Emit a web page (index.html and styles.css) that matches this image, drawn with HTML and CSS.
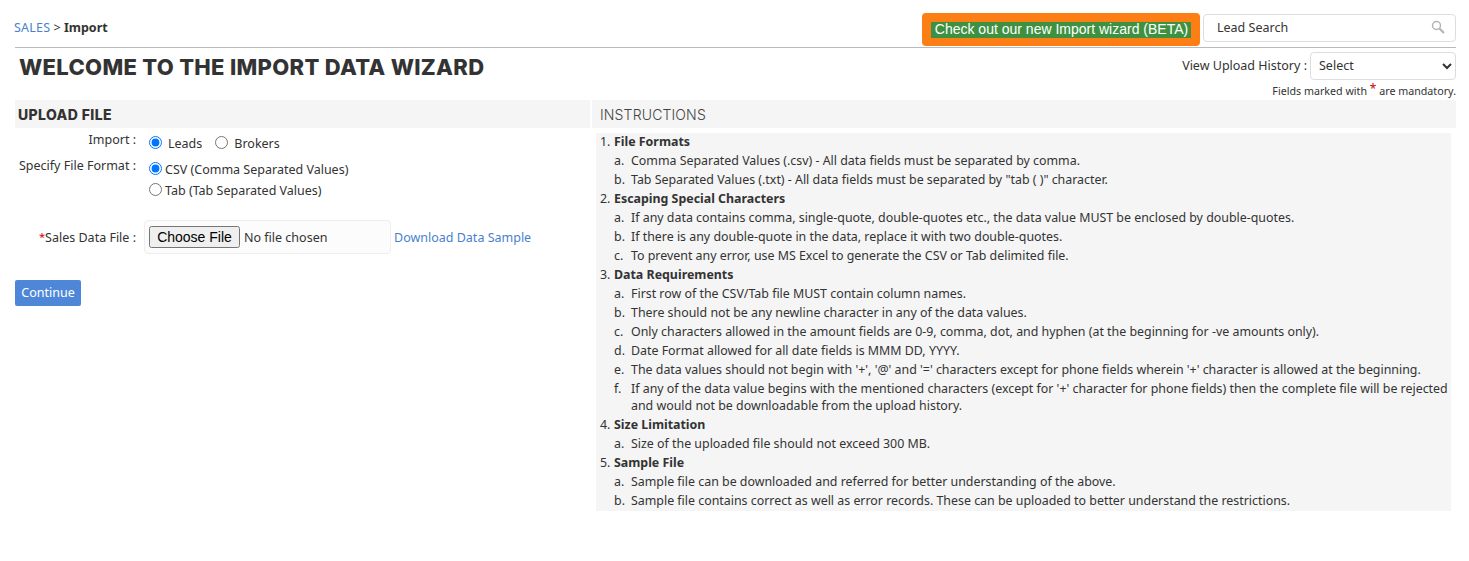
FILE: index.html
```html
<!DOCTYPE html>
<html lang="en">
<head>
    <meta charset="UTF-8">
    <meta name="viewport" content="width=device-width, initial-scale=1.0">
    <title>Import Data Wizard</title>
    <link rel="stylesheet" href="styles.css">
</head>
<body>

    <div class="page">
        <div class="top-bar">
            <div class="breadcrumb"><a href="#">SALES</a> &gt; <b>Import</b></div>
            <div class="top-actions">
                <div class="wizard-btn"><span>Check out our new Import wizard (BETA)</span></div>
                <div class="lead-search">
                    <span>Lead Search</span>
                    <svg width="14" height="14" viewBox="0 0 14 14" fill="none" stroke="#b5b5b5">
                        <circle cx="5.5" cy="5.5" r="4" stroke-width="1.5"/>
                        <path d="M8.5 8.5 L13 13" stroke-width="2.2"/>
                    </svg>
                </div>
            </div>
        </div>

        <div class="title-row">
            <h1>WELCOME TO THE IMPORT DATA WIZARD</h1>
            <div class="title-right">
                <div class="history">
                    <label>View Upload History :</label>
                    <select><option>Select</option></select>
                </div>
                <div class="mandatory">Fields marked with <span class="req big">*</span> are mandatory.</div>
            </div>
        </div>

        <div class="columns">
            <div class="upload">
                <h3 class="upload-title">UPLOAD FILE</h3>
                <div class="form-row row-import">
                    <div class="form-label">Import :</div>
                    <div class="inline-radios">
                        <label><input type="radio" name="kind" checked>Leads</label>
                        <label><input type="radio" name="kind">Brokers</label>
                    </div>
                </div>
                <div class="form-row row-format">
                    <div class="form-label">Specify File Format :</div>
                    <div class="stack-radios">
                        <label><input type="radio" name="format" checked>CSV (Comma Separated Values)</label>
                        <label><input type="radio" name="format">Tab (Tab Separated Values)</label>
                    </div>
                </div>
                <div class="form-row row-file">
                    <div class="form-label"><span class="req">*</span>Sales Data File :</div>
                    <div class="file-box"><input type="file"></div>
                    <a href="#" class="sample">Download Data Sample</a>
                </div>
                <button class="continue">Continue</button>
            </div>

            <div class="instructions">
                <h3 class="instructions-title">INSTRUCTIONS</h3>
                <ol class="steps">
                    <li><b>File Formats</b>
                        <ol>
                            <li>Comma Separated Values (.csv) - All data fields must be separated by comma.</li>
                            <li>Tab Separated Values (.txt) - All data fields must be separated by "tab ( )" character.</li>
                        </ol>
                    </li>
                    <li><b>Escaping Special Characters</b>
                        <ol>
                            <li>If any data contains comma, single-quote, double-quotes etc., the data value MUST be enclosed by double-quotes.</li>
                            <li>If there is any double-quote in the data, replace it with two double-quotes.</li>
                            <li>To prevent any error, use MS Excel to generate the CSV or Tab delimited file.</li>
                        </ol>
                    </li>
                    <li><b>Data Requirements</b>
                        <ol>
                            <li>First row of the CSV/Tab file MUST contain column names.</li>
                            <li>There should not be any newline character in any of the data values.</li>
                            <li>Only characters allowed in the amount fields are 0-9, comma, dot, and hyphen (at the beginning for -ve amounts only).</li>
                            <li>Date Format allowed for all date fields is MMM DD, YYYY.</li>
                            <li>The data values should not begin with '+', '@' and '=' characters except for phone fields wherein '+' character is allowed at the beginning.</li>
                            <li>If any of the data value begins with the mentioned characters (except for '+' character for phone fields) then the complete file will be rejected and would not be downloadable from the upload history.</li>
                        </ol>
                    </li>
                    <li><b>Size Limitation</b>
                        <ol>
                            <li>Size of the uploaded file should not exceed 300 MB.</li>
                        </ol>
                    </li>
                    <li><b>Sample File</b>
                        <ol>
                            <li>Sample file can be downloaded and referred for better understanding of the above.</li>
                            <li>Sample file contains correct as well as error records. These can be uploaded to better understand the restrictions.</li>
                        </ol>
                    </li>
                </ol>
            </div>
        </div>
    </div>

</body>
</html>
```

FILE: styles.css
```css
* {
    margin: 0;
    padding: 0;
    box-sizing: border-box;
}

body {
    font-family: "Noto Sans", Arial, sans-serif;
    font-size: 12.5px;
    color: #333;
    background: #fff;
}

a {
    color: #4a7fd0;
    text-decoration: none;
}

.page {
    padding: 0 13px 0 15px;
}

.top-bar {
    display: flex;
    justify-content: space-between;
    height: 48px;
    padding-top: 13px;
    border-bottom: 1px solid #b9b9b9;
}

.breadcrumb {
    padding-top: 6px;
    line-height: 17px;
    margin-left: -1px;
}

.breadcrumb a {
    letter-spacing: 0.2px;
}

.top-actions {
    display: flex;
    gap: 3px;
}

.wizard-btn {
    width: 278px;
    height: 33px;
    background: #fd7e14;
    border-radius: 4px;
    padding-top: 8px;
    text-align: center;
}

.wizard-btn span {
    display: inline-block;
    background: #3f9142;
    color: #fff;
    font-family: "Liberation Sans", Arial, sans-serif;
    font-size: 14px;
    line-height: 15px;
    padding: 0 3px 1px 4px;
}

.lead-search {
    width: 253px;
    height: 28px;
    margin-top: 1px;
    border: 1px solid #ddd;
    border-radius: 4px;
    display: flex;
    justify-content: space-between;
    align-items: center;
    padding: 0 10px 2px 13px;
}

.title-row {
    display: flex;
    justify-content: space-between;
    height: 52px;
}

h1 {
    font-family: Inter, Arial, sans-serif;
    font-size: 22px;
    font-weight: 800;
    letter-spacing: 0.3px;
    margin: 5px 0 0 4px;
    line-height: 28px;
    color: #333;
}

.title-right {
    text-align: right;
}

.history {
    display: flex;
    justify-content: flex-end;
    align-items: center;
    gap: 3px;
    margin-top: 4px;
}

.history label {
    padding-bottom: 2px;
}

.history select {
    width: 146px;
    height: 28px;
    border: 1px solid #ddd;
    border-radius: 4px;
    background: #fff;
    font-family: inherit;
    font-size: 12.5px;
    line-height: 17px;
    color: #333;
    padding: 0 0 2px 4px;
}

.mandatory {
    font-size: 10.7px;
    line-height: 14px;
    margin-top: 4px;
}

.req {
    color: #c00;
    font-size: 11px;
    vertical-align: 1px;
}

.big {
    font-size: 12px;
    line-height: 10px;
    vertical-align: 2px;
}

.columns {
    display: flex;
    gap: 2px;
}

.upload {
    width: 575px;
}

.upload-title {
    background: #f5f5f5;
    height: 28px;
    line-height: 30px;
    padding-left: 3px;
    font-size: 14px;
    font-weight: 800;
    letter-spacing: 0.4px;
    font-family: Inter, Arial, sans-serif;
}

.form-row {
    display: flex;
}

.form-label {
    width: 121px;
    text-align: right;
    flex-shrink: 0;
}

.row-import {
    margin-top: 3px;
    height: 26px;
    line-height: 17px;
}

.inline-radios {
    padding-left: 13px;
    display: flex;
    gap: 13px;
}

.inline-radios input,
.stack-radios input {
    width: 13px;
    height: 13px;
    vertical-align: -1px;
}

.inline-radios label {
    line-height: 26px;
}

.inline-radios input {
    margin-right: 6px;
}

.row-format {
    height: 55px;
    line-height: 17px;
}

.stack-radios {
    padding-left: 13px;
    padding-top: 2px;
}

.stack-radios label {
    display: block;
    height: 21px;
    line-height: 21px;
}

.stack-radios input {
    margin-right: 3px;
}

.row-file {
    align-items: center;
    height: 34px;
    margin-top: 8px;
}

.file-box {
    width: 247px;
    height: 34px;
    margin-left: 8px;
    margin-right: 3px;
    padding: 5px 4px;
    border: 1px solid #eee;
    border-radius: 4px;
    background: #fcfcfc;
}

.file-box input {
    font-family: inherit;
    font-size: 12.5px;
    width: 230px;
}

.file-box input::file-selector-button {
    font-family: "Liberation Sans", Arial, sans-serif;
    font-size: 14px;
    width: 91px;
    height: 22px;
    margin-right: 4px;
}

.continue {
    display: block;
    margin-top: 26px;
    width: 66px;
    height: 26px;
    background: #4f87d8;
    color: #fff;
    border: none;
    border-radius: 2px;
    padding-bottom: 2px;
    font-family: inherit;
    font-size: 12.5px;
}

.instructions {
    flex: 1;
}

.instructions-title {
    background: #f5f5f5;
    height: 28px;
    line-height: 29px;
    padding-left: 8px;
    font-size: 14px;
    font-weight: 300;
    letter-spacing: 0.15px;
    color: #444;
    font-family: Inter, Arial, sans-serif;
}

.steps {
    margin: 5px 5px 0 4px;
    background: #f5f5f5;
    padding-left: 18px;
    font-size: 12.4px;
    line-height: 17px;
    list-style: none;
    counter-reset: step;
}

.steps > li {
    counter-increment: step;
    position: relative;
}

.steps > li > b {
    display: block;
    padding-bottom: 2px;
}

.steps > li::before {
    content: counter(step) ".";
    position: absolute;
    left: -14px;
}

.steps ol {
    list-style: none;
    counter-reset: sub;
    padding-left: 17px;
}

.steps ol li {
    counter-increment: sub;
    position: relative;
    padding-bottom: 2px;
}

.steps ol li::before {
    content: counter(sub, lower-alpha) ".";
    position: absolute;
    left: -17px;
}
```
